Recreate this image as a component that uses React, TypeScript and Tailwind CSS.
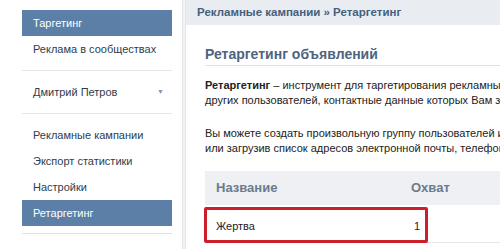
import React from 'react';

const font = { fontFamily: '"Liberation Sans", Arial, sans-serif' };

const SideItem: React.FC<{ label: string; active?: boolean; arrow?: boolean }> = ({ label, active, arrow }) => (
  <div
    className={`flex h-[26px] items-center justify-between whitespace-nowrap pl-[11px] pr-[8px] text-[11px] ${
      active ? 'bg-[#5b7fa6] text-white' : 'text-[#2f3d4c]'
    }`}
  >
    <span>{label}</span>
    {arrow && <span className="text-[7px] text-[#8a95a3]">▼</span>}
  </div>
);

const Divider = () => <div className="my-2 h-px bg-[#e3e6ea]" />;

const App: React.FC = () => {
  return (
    <div className="flex h-[249px] w-[500px] overflow-hidden bg-white" style={font}>
      <aside className="w-[182px] shrink-0 pl-[22px] pr-[10px] pt-[10px]">
        <SideItem label="Таргетинг" active />
        <SideItem label="Реклама в сообществах" />
        <Divider />
        <SideItem label="Дмитрий Петров" arrow />
        <Divider />
        <SideItem label="Рекламные кампании" />
        <SideItem label="Экспорт статистики" />
        <SideItem label="Настройки" />
        <SideItem label="Ретаргетинг" active />
        <div className="mt-[7px] h-px bg-[#e4dfea]" />
      </aside>

      <div className="w-[4px] shrink-0 border-x border-[#e2e4e7] bg-[#f4f5f6]" />

      <main className="min-w-0 flex-1 overflow-hidden">
        <div className="flex h-[25px] items-center bg-[#e9edf1] pl-[11px] text-[11.5px] font-bold text-[#45607e] whitespace-nowrap">
          Рекламные кампании » Ретаргетинг
        </div>

        <div className="pl-[19px]">
          <h1 className="mt-[20px] border-b border-[#dfe3e8] pb-[2px] text-[14px] font-bold leading-[18px] text-[#4e6480] whitespace-nowrap">
            Ретаргетинг объявлений
          </h1>

          <p className="mt-[12px] text-[11px] leading-[15px] text-[#222] whitespace-nowrap">
            <b>Ретаргетинг</b> – инструмент для таргетирования рекламных объявлений
            <br />
            других пользователей, контактные данные которых Вам заранее
          </p>

          <p className="mt-[18px] text-[11px] leading-[15px] text-[#222] whitespace-nowrap">
            Вы можете создать произвольную группу пользователей и показывать
            <br />
            или загрузив список адресов электронной почты, телефонов
          </p>

          <div className="relative mt-[15px]">
            <div className="flex h-[34px] items-center bg-[#eef0f3] text-[13px] font-bold text-[#6b7b8e]">
              <div className="w-[195px] shrink-0 pl-[11px]">Название</div>
              <div className="pl-[11px]">Охват</div>
            </div>
            <div className="flex h-[38px] items-center border-b border-[#e3e6ea] pt-[5px] text-[11px] text-[#222]">
              <div className="w-[195px] shrink-0 pl-[11px]">Жертва</div>
              <div className="pl-[14px]">1</div>
            </div>
            <div className="absolute left-[-1px] top-[36px] h-[36px] w-[224px] rounded-[2px] border-[3px] border-[#cc1f2b]" />
          </div>
        </div>
      </main>
    </div>
  );
};

export default App;
